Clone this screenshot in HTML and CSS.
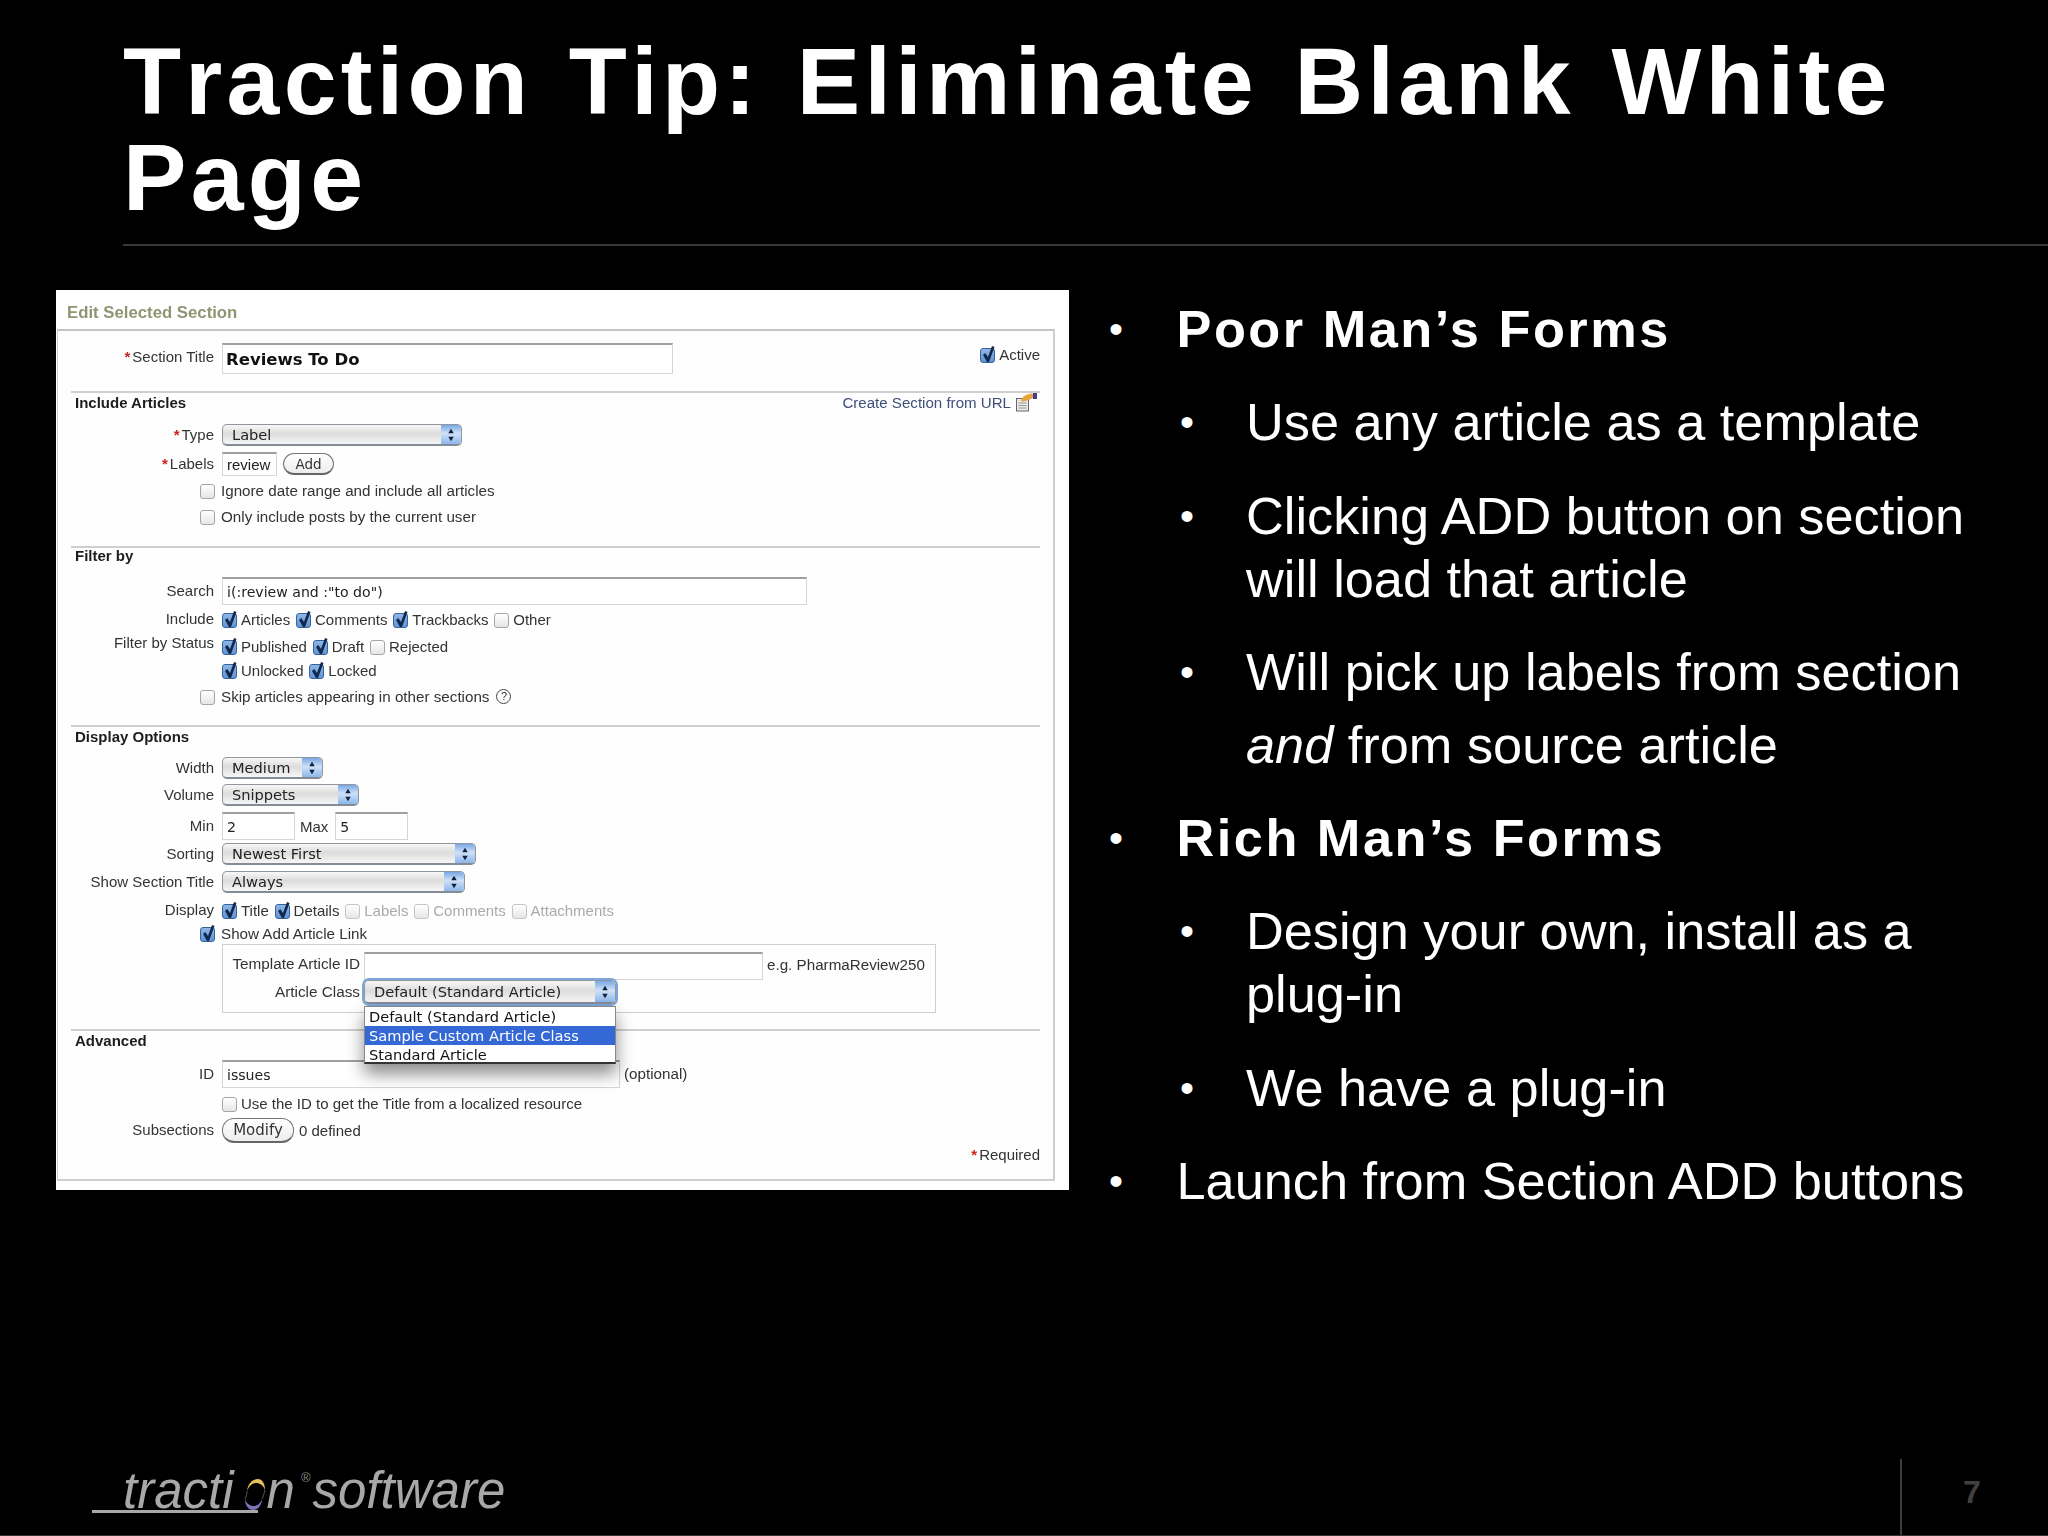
FILE: index.html
```html
<!DOCTYPE html>
<html lang="en">
<head>
<meta charset="utf-8">
<title>Traction Tip: Eliminate Blank White Page</title>
<link rel="stylesheet" href="styles.css">
</head>
<body>
<svg class="defs" width="0" height="0" aria-hidden="true">
  <symbol id="chk" viewBox="0 0 16 20"><path d="M3 10 L7 17 L9 17 L14.5 2 L12 1 L8 12 L5.2 8 Z" fill="#12284d"/></symbol>
  <symbol id="arr" viewBox="0 0 14 22"><path d="M7 4 L10 9 H4 Z M7 18 L4 13 H10 Z" fill="#10213f"/></symbol>
</svg>
<div class="slide">
  <header class="head">
    <h1>Traction Tip: Eliminate Blank White Page</h1>
  </header>
  <main class="main">
    <section class="panel">
      <div class="ptitle">Edit Selected Section</div>
      <div class="box">
        <div class="row h31 mt12">
          <span class="lbl"><i class="req">*</i>Section Title</span>
          <span class="inp w451 strong">Reviews To Do</span>
          <span class="active"><span class="cb on"><svg><use href="#chk"/></svg></span>Active</span>
        </div>

        <div class="sec mt17">
          <div class="sechead h18"><b>Include Articles</b><span class="url">Create Section from URL
            <svg class="urlicon" width="21" height="20" viewBox="0 0 21 20"><rect x="0.5" y="6.5" width="12" height="12.5" fill="#e8e8e8" stroke="#666"/><path d="M2.5 11h8M2.5 13.5h8M2.5 16h8" stroke="#999"/><path d="M5 9 C5 6 9 3 13 2 C16 1 18 2 18 4 C18 6 15 7 12 8 C10 9 7 10 5 9 Z" fill="#e6a33e"/><rect x="17" y="1" width="4" height="6" fill="#4a3f86"/></svg></span></div>
          <div class="row h22 mt13"><span class="lbl"><i class="req">*</i>Type</span><span class="sel w240"><span>Label</span><span class="arrows"><svg><use href="#arr"/></svg></span></span></div>
          <div class="row h24 mt6"><span class="lbl"><i class="req">*</i>Labels</span><span class="inp w55 tight">review</span><span class="btn w51">Add</span></div>
          <div class="row h20 mt5 sub"><span class="cb"></span>Ignore date range and include all articles</div>
          <div class="row h20 mt6 sub"><span class="cb"></span>Only include posts by the current user</div>
        </div>

        <div class="sec mt19">
          <div class="sechead h20 up"><b>Filter by</b></div>
          <div class="row h28 mt9"><span class="lbl">Search</span><span class="inp w585">i(:review and :"to do")</span></div>
          <div class="row h20 mt5"><span class="lbl">Include</span>
            <span class="opt"><span class="cb on"><svg><use href="#chk"/></svg></span>Articles</span>
            <span class="opt"><span class="cb on"><svg><use href="#chk"/></svg></span>Comments</span>
            <span class="opt"><span class="cb on"><svg><use href="#chk"/></svg></span>Trackbacks</span>
            <span class="opt"><span class="cb"></span>Other</span>
          </div>
          <div class="row h20 mt7"><span class="lbl lbltop">Filter by Status</span>
            <span class="opt"><span class="cb on"><svg><use href="#chk"/></svg></span>Published</span>
            <span class="opt"><span class="cb on"><svg><use href="#chk"/></svg></span>Draft</span>
            <span class="opt"><span class="cb"></span>Rejected</span>
          </div>
          <div class="row h20 mt4 indent">
            <span class="opt"><span class="cb on"><svg><use href="#chk"/></svg></span>Unlocked</span>
            <span class="opt"><span class="cb on"><svg><use href="#chk"/></svg></span>Locked</span>
          </div>
          <div class="row h20 mt6 sub"><span class="cb"></span>Skip articles appearing in other sections <span class="help">?</span></div>
        </div>

        <div class="sec mt18">
          <div class="sechead h20"><b>Display Options</b></div>
          <div class="row h22 mt10"><span class="lbl">Width</span><span class="sel w101"><span>Medium</span><span class="arrows"><svg><use href="#arr"/></svg></span></span></div>
          <div class="row h22 mt5"><span class="lbl">Volume</span><span class="sel w137"><span>Snippets</span><span class="arrows"><svg><use href="#arr"/></svg></span></span></div>
          <div class="row h28 mt6"><span class="lbl">Min</span><span class="inp w73">2</span><span class="between minmax">Max</span><span class="inp w73">5</span></div>
          <div class="row h22 mt3"><span class="lbl">Sorting</span><span class="sel w254"><span>Newest First</span><span class="arrows"><svg><use href="#arr"/></svg></span></span></div>
          <div class="row h22 mt6"><span class="lbl">Show Section Title</span><span class="sel w243"><span>Always</span><span class="arrows"><svg><use href="#arr"/></svg></span></span></div>
          <div class="row h20 mt8"><span class="lbl">Display</span>
            <span class="opt"><span class="cb on"><svg><use href="#chk"/></svg></span>Title</span>
            <span class="opt"><span class="cb on"><svg><use href="#chk"/></svg></span>Details</span>
            <span class="opt off"><span class="cb"></span>Labels</span>
            <span class="opt off"><span class="cb"></span>Comments</span>
            <span class="opt off"><span class="cb"></span>Attachments</span>
          </div>
          <div class="row h20 mt3 sub"><span class="cb on"><svg><use href="#chk"/></svg></span>Show Add Article Link</div>
          <div class="fieldset">
            <div class="row h28 tmpl"><span class="lbl2">Template Article ID</span><span class="inp w399"></span><span class="eg">e.g. PharmaReview250</span></div>
            <div class="row h24"><span class="lbl2">Article Class</span>
              <span class="sel w252 focus"><span>Default (Standard Article)</span><span class="arrows"><svg><use href="#arr"/></svg></span>
                <span class="menu">
                  <span class="opt-item">Default (Standard Article)</span>
                  <span class="opt-item hl">Sample Custom Article Class</span>
                  <span class="opt-item">Standard Article</span>
                </span>
              </span>
            </div>
          </div>
        </div>

        <div class="sec mt16">
          <div class="sechead h20"><b>Advanced</b></div>
          <div class="row h28 mt9"><span class="lbl">ID</span><span class="inp w398">issues</span><span class="eg">(optional)</span></div>
          <div class="row h20 mt6 indent"><span class="opt"><span class="cb"></span>Use the ID to get the Title from a localized resource</span></div>
          <div class="row h25 mt4"><span class="lbl">Subsections</span><span class="btn w72 first">Modify</span><span class="between">0 defined</span></div>
          <div class="required"><i class="req">*</i>Required</div>
        </div>
      </div>
    </section>

    <ul class="points">
      <li class="l1 bold">Poor Man’s Forms</li>
      <li class="l2">Use any article as a template</li>
      <li class="l2">Clicking ADD button on section will load that article</li>
      <li class="l2"><div>Will pick up labels from section<span class="wide"><em>and</em> from source article</span></div></li>
      <li class="l1 bold">Rich Man’s Forms</li>
      <li class="l2">Design your own, install as a plug-in</li>
      <li class="l2">We have a plug-in</li>
      <li class="l1">Launch from Section ADD buttons</li>
    </ul>
  </main>
  <footer class="foot">
    <div class="logo"><span class="mark">tracti<svg class="oh" width="24" height="32" viewBox="0 0 22 32"><path d="M3 13 C3 16 2 19 1 21 M21 12 C20 16 19 19 18 21" fill="none" stroke="#5a5a5a" stroke-width="1"/><path d="M3 13 C4 5 9 1 14 1 C18 1 21 5 21 12 C19 7 16 5 12 5 C8 5 5 8 3 13 Z" fill="#e6c25a"/><path d="M1 21 C3 27 7 28 10 28 C13 28 16 26 18 21 C18 27 14 32 9 32 C4 32 1 27 1 21 Z" fill="#7a74b8"/></svg>n</span><sup class="reg">®</sup><span class="soft">software</span></div>
    <div class="pageno"><span>7</span></div>
  </footer>
</div>
</body>
</html>
```
FILE: styles.css
```css
html, body { margin: 0; padding: 0; background: #000; }
.defs { display: block; height: 0; width: 0; }
.slide {
  width: 2048px; height: 1536px; display: flex; flex-direction: column;
  background: #000; color: #fff; font-family: "Liberation Sans", Arial, sans-serif; overflow: hidden;
}
.head { margin-left: 123px; padding: 33px 0 19px; border-bottom: 2px solid #383838; }
.head h1 { margin: 0; font-size: 95px; line-height: 96px; font-weight: 700; font-kerning: none; letter-spacing: 4.3px; word-spacing: 6px; width: 1800px; }

.main { display: flex; align-items: flex-start; margin-top: 44px; }
.panel { width: 1013px; height: 900px; margin-left: 56px; background: #fff; color: #333; flex: none;
  font-size: 15px; filter: blur(.45px); }
.ptitle { height: 26px; padding: 13px 0 0 11px; line-height: 20px; font-size: 16.75px; font-weight: 700; color: #8d9672; }
.box { box-sizing: border-box; height: 852px; width: 998px; margin-left: 1px; padding: 0 13px; border: 1px solid #cfcfcf; border-top: 2px solid #c4c4c4; border-bottom: 2px solid #cfcfcf; border-right: 2px solid #cfcfcf; background: #fefefe; }

.row { display: flex; align-items: center; white-space: nowrap; }
.row.h20 { box-sizing: border-box; padding-bottom: 2px; }
.sec { border-top: 2px solid #cfcfcf; }
.sechead { box-sizing: border-box; display: flex; align-items: center; justify-content: space-between; color: #1d1d1d; font-size: 15px; padding-left: 4px; }
.sechead.h20 { padding-bottom: 2px; }
.sechead.up { padding-bottom: 5px; }
.lbl { width: 143px; margin: 0 8px 2px 0; text-align: right; flex: none; }
.h31 .lbl { margin-bottom: 4px; }
.lbl2 { width: 135px; margin: 0 4px 0 2px; text-align: right; flex: none; font-size: 15.3px; }
.tmpl .lbl2, .tmpl .eg { margin-bottom: 4px; }
.lbltop { align-self: flex-start; line-height: 12px; }
.req { color: #c22; font-style: normal; font-weight: 700; margin-right: 2px; }
.h18 { height: 18px; } .h20 { height: 20px; } .h22 { height: 22px; } .h24 { height: 24px; } .h25 { height: 25px; } .h28 { height: 28px; } .h31 { height: 31px; }
.mt3 { margin-top: 3px; } .mt4 { margin-top: 4px; } .mt5 { margin-top: 5px; } .mt6 { margin-top: 6px; } .mt7 { margin-top: 7px; } .mt8 { margin-top: 8px; } .mt9 { margin-top: 9px; } .mt10 { margin-top: 10px; } .mt12 { margin-top: 12px; } .mt13 { margin-top: 13px; } .mt16 { margin-top: 16px; } .mt17 { margin-top: 17px; } .mt18 { margin-top: 18px; } .mt19 { margin-top: 19px; }

.inp { box-sizing: border-box; height: 100%; display: flex; align-items: center; padding-left: 4px; background: #fff; border: 1px solid #d6d6d6; border-top: 2px solid #a0a0a0; font-family: "DejaVu Sans", sans-serif; font-size: 14.1px; color: #222; flex: none; }
.strong { font-weight: 700; font-size: 16.5px; color: #111; padding-left: 3px; }
.tight { font-family: "Liberation Sans", Arial, sans-serif; font-size: 15px; }
.w451 { width: 451px; } .w55 { width: 55px; } .w585 { width: 585px; } .w73 { width: 73px; } .w399 { width: 399px; } .w398 { width: 398px; }
.w240 { width: 240px; } .w101 { width: 101px; } .w137 { width: 137px; } .w254 { width: 254px; } .w243 { width: 243px; } .w252 { width: 252px; } .w51 { width: 51px; } .w72 { width: 72px; }

.sel { position: relative; box-sizing: border-box; height: 100%; display: flex; align-items: center; justify-content: space-between; padding-left: 9px; flex: none;
  border: 1px solid #8f96a0; border-bottom: 2px solid #868c96; border-radius: 5px;
  background: linear-gradient(#f8f8f8, #dcdcdc 45%, #f6f6f6);
  font-family: "DejaVu Sans", sans-serif; font-size: 14.6px; color: #222; }
.arrows { box-sizing: border-box; width: 20px; height: 100%; display: flex; align-items: center; justify-content: center; border-radius: 0 4px 4px 0; background: linear-gradient(#7aa8e4, #cfe1f7 45%, #8db6ea); }
.arrows svg { width: 14px; height: 20px; }
.focus { box-shadow: 0 0 0 2px #7da7d9; }
.menu { position: absolute; z-index: 3; left: -1px; top: 25px; width: 252px; box-sizing: border-box; height: 58px; background: #fff; border: 1px solid #888; border-bottom: 2px solid #333; box-shadow: 0 10px 16px rgba(0,0,0,.45); display: flex; flex-direction: column; }
.opt-item { height: 19px; line-height: 19px; padding-left: 4px; color: #111; }
.hl { background: #3468d4; color: #fff; }

.btn { box-sizing: border-box; height: 22px; display: flex; align-items: center; justify-content: center; margin-left: 6px; border: 1px solid #777; border-bottom: 2px solid #666; border-radius: 12px; background: linear-gradient(#fff, #ececec); font-family: "DejaVu Sans", sans-serif; font-size: 13.5px; flex: none; }
.btn.first { margin-left: 0; height: 25px; font-size: 15px; }

.cb { box-sizing: border-box; position: relative; display: inline-block; width: 15px; height: 15px; margin: 2px 4px 0 0; border: 1px solid #a5a5a5; border-radius: 3px; background: linear-gradient(#fff, #e6e6e6); flex: none; }
.cb.on { border-color: #37639c; background: linear-gradient(#8fb6e6, #5f95d8); }
.cb svg { position: absolute; left: -1px; top: -4px; width: 16px; height: 20px; }
.opt { display: inline-flex; align-items: center; margin-right: 5.8px; }
.off { color: #aaa; }
.off .cb { border-color: #c4c4c4; }
.sub { margin-left: 129px; font-size: 15.2px; }
.sub .cb { margin-right: 6px; }
.indent { margin-left: 151px; }
.help { display: inline-flex; align-items: center; justify-content: center; box-sizing: border-box; width: 15px; height: 15px; margin-left: 7px; border: 1.5px solid #444; border-radius: 50%; font-size: 11px; color: #333; }
.between { margin: 0 5px; }
.minmax { margin-right: 7px; }
.eg { margin-left: 4px; margin-bottom: 2px; font-size: 15.2px; }
.url { display: inline-flex; align-items: center; margin-right: 3px; color: #3f4f78; font-size: 15.1px; }
.urlicon { margin-left: 5px; }
.active { margin-left: auto; display: inline-flex; align-items: center; margin-top: -9px; }
.fieldset { box-sizing: border-box; height: 69px; width: 714px; margin: 0 0 0 151px; padding-top: 7px; border: 1px solid #cfcfcf; }
.required { text-align: right; margin-top: 3px; line-height: 18px; }

.points { list-style: none; margin: 0 0 0 46px; padding: 8px 70px 0 0; flex: 1; font-size: 52.3px; line-height: 63px; }
.points li { display: flex; margin-top: 30.3px; }
.points li:first-child { margin-top: 0; }
.points li::before { content: "•"; flex: none; font-size: 40px; font-weight: 400; letter-spacing: 0; margin-left: -6px; }
.l1::before { width: 67.5px; }
.l2 { margin-left: 71px; }
.l2::before { width: 66px; }
.bold { font-weight: 700; letter-spacing: 2.5px; }
.wide { display: block; margin-top: 10px; }

.foot { position: relative; margin-top: auto; height: 76px; display: flex; justify-content: space-between; align-items: flex-start; border-bottom: 1px solid #333; }
.logo { position: relative; margin: 2px 0 0 92px; display: flex; align-items: baseline; color: #a8a8a8; font-style: italic; font-size: 51px; line-height: 60px; }
.logo::after { content: ""; position: absolute; left: 0; top: 49px; width: 166px; height: 3px; background: #a8a8a8; }
.mark { display: inline-block; padding-left: 31px; }
.oh { vertical-align: -2px; margin-left: 9px; }
.reg { font-size: 13px; font-style: normal; align-self: flex-start; line-height: 16px; margin: 9px 2px 0 6px; color: #888; }
.pageno { box-sizing: border-box; width: 148px; height: 76px; border-left: 2px solid #3c3c3c; color: #404040; font-weight: 700; font-size: 32px; line-height: 48px; padding: 9px 0 0 61px; }
```
